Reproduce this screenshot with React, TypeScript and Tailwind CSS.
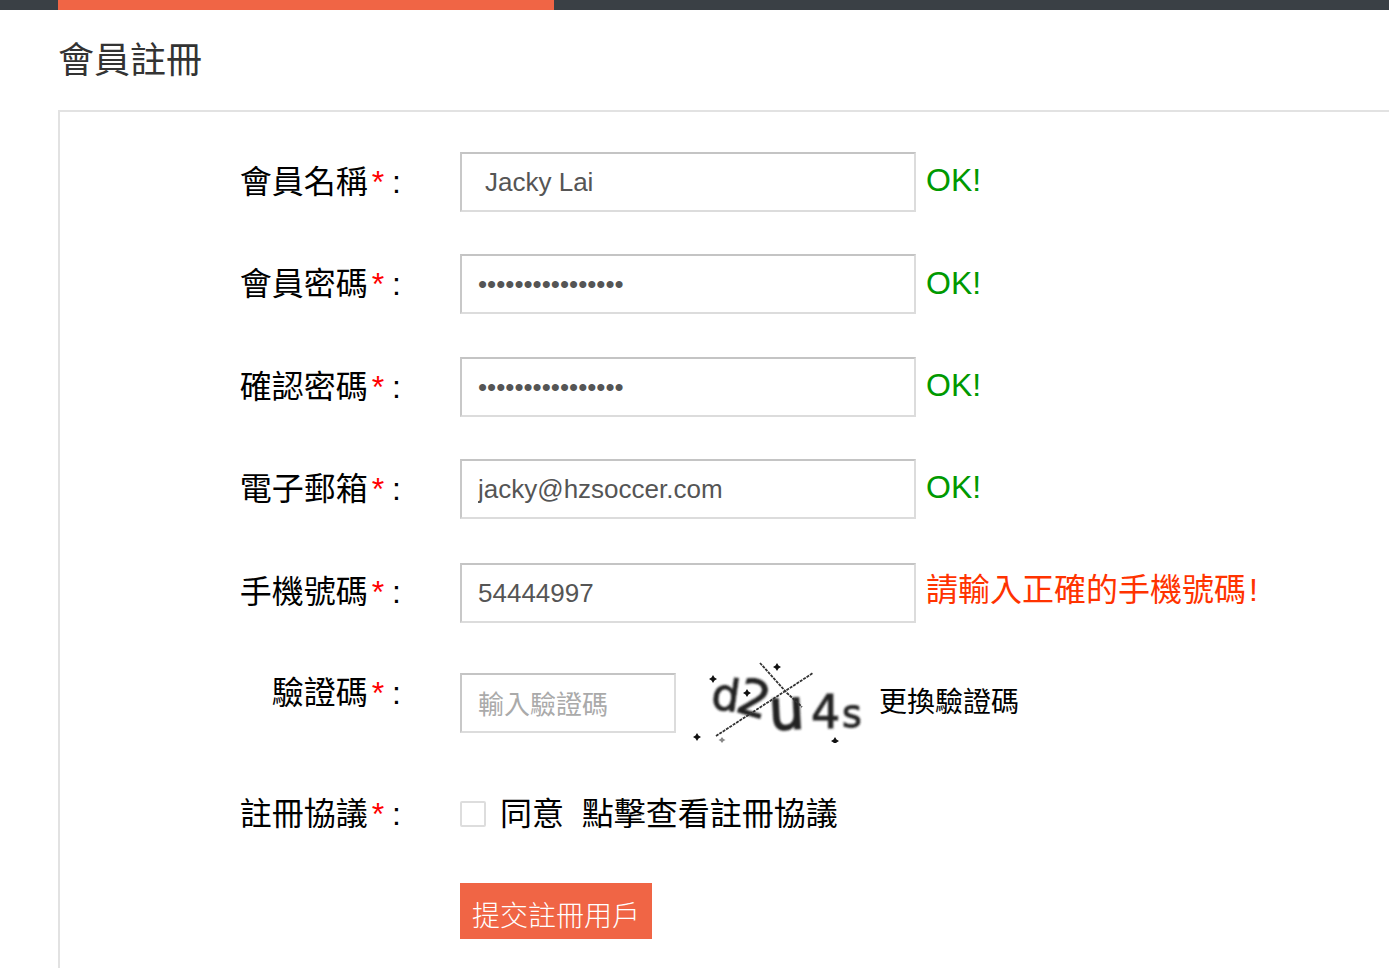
const cjk = "font-['Liberation_Sans','Noto_Sans_CJK_TC',sans-serif]";

function Label({ text, shift = "" }: { text: string; shift?: string }) {
  return (
    <div className={`${shift} w-[340px] mr-[60px] flex justify-end items-center text-[32px] leading-[40px] text-black whitespace-nowrap`}>
      <span>{text}</span>
      <span className="text-[#ff0000] ml-[4px]">*</span>
      <span className="ml-[8px] mr-[-1px]">:</span>
    </div>
  );
}

function Field({
  type = "text",
  value,
  pad = "pl-[16px]",
  width = "w-[456px]",
  placeholder,
}: {
  type?: string;
  value?: string;
  pad?: string;
  width?: string;
  placeholder?: string;
}) {
  return (
    <input
      readOnly
      type={type}
      value={value}
      placeholder={placeholder}
      className={`${width} ${pad} h-[60px] border-2 border-t-[#c4c4c4] border-l-[#c8c8c8] border-r-[#dcdcdc] border-b-[#dcdcdc] bg-white text-[#555555] text-[26px] outline-none placeholder:text-[#aaaaaa]`}
    />
  );
}

function Ok({ shift = "-mt-[4px]" }: { shift?: string }) {
  return <span className={`${shift} ml-[10px] text-[32px] leading-[40px] text-[#009900]`}>OK!</span>;
}

function Captcha() {
  const face = "'DejaVu Sans', sans-serif";
  return (
    <svg width="172" height="88" viewBox="0 0 172 88" className="ml-[16px] -mt-[8px] shrink-0">
      <defs>
        <filter id="soft">
          <feGaussianBlur stdDeviation="0.8" />
        </filter>
      </defs>
      <g fill="#222" stroke="#222" strokeWidth="0.9" fontFamily={face} filter="url(#soft)">
        <text x="20" y="55" fontSize="44" transform="rotate(8 32 40)">d</text>
        <text x="46" y="60" fontSize="50" transform="rotate(16 58 44)">2</text>
        <text x="77" y="74" fontSize="56" strokeWidth="1.6" transform="rotate(-3 95 58)">u</text>
        <text x="119" y="73" fontSize="46">4</text>
        <text x="150" y="72" fontSize="38">s</text>
      </g>
      <g stroke="#333" strokeWidth="1.8" fill="none" strokeDasharray="3 1">
        <path d="M24 81 L121 18" />
        <path d="M68 8 L95 38 L110 52" />
      </g>
      <g fill="#111">
        <path d="M85 8 l1.5 2.5 2.5 1.5 -2.5 1.5 -1.5 2.5 -1.5 -2.5 -2.5 -1.5 2.5 -1.5z" />
        <path d="M5 78 l1.5 2.5 2.5 1.5 -2.5 1.5 -1.5 2.5 -1.5 -2.5 -2.5 -1.5 2.5 -1.5z" />
        <path d="M143 82 l1.5 2.5 2.5 1.5 -2.5 1.5 -1.5 2.5 -1.5 -2.5 -2.5 -1.5 2.5 -1.5z" />
        <path d="M55 34 l1.5 2.5 2.5 1.5 -2.5 1.5 -1.5 2.5 -1.5 -2.5 -2.5 -1.5 2.5 -1.5z" />
        <path d="M21 20 l1.5 2.5 2.5 1.5 -2.5 1.5 -1.5 2.5 -1.5 -2.5 -2.5 -1.5 2.5 -1.5z" />
        <path d="M30 82 l1.5 2 2 1 -2 1 -1.5 2 -1.5 -2 -2 -1 2 -1z" fillOpacity="0.5" />
      </g>
    </svg>
  );
}

export default function App() {
  return (
    <div className={`${cjk} w-[1389px] h-[968px] overflow-hidden bg-white`}>
      <div className="h-[10px] bg-[#3a4045] pl-[58px]">
        <div className="w-[496px] h-[10px] bg-[#f06545]" />
      </div>
      <h1 className="ml-[58px] h-[100px] pt-[28px] text-[36px] leading-[46px] font-normal text-[#333333]">會員註冊</h1>
      <div className="ml-[58px] w-[1400px] h-[900px] border-2 border-[#e2e2e2] pt-[40px]">
        <div className="flex items-center h-[60px] mb-[42px]">
          <Label text="會員名稱" />
          <Field value="Jacky Lai" pad="pl-[23px]" />
          <Ok />
        </div>
        <div className="flex items-center h-[60px] mb-[43px]">
          <Label text="會員密碼" />
          <Field type="password" value="1234567890123456" />
          <Ok shift="-mt-[2px]" />
        </div>
        <div className="flex items-center h-[60px] mb-[42px]">
          <Label text="確認密碼" />
          <Field type="password" value="1234567890123456" />
          <Ok />
        </div>
        <div className="flex items-center h-[60px] mb-[44px]">
          <Label text="電子郵箱" />
          <Field value="jacky@hzsoccer.com" />
          <Ok />
        </div>
        <div className="flex items-center h-[60px] mb-[50px]">
          <Label text="手機號碼" shift="-mt-[2px]" />
          <Field value="54444997" />
          <span className="ml-[10px] -mt-[6px] text-[32px] leading-[40px] text-[#ff3300]">
            請輸入正確的手機號碼<span className="ml-[3px]">!</span>
          </span>
        </div>
        <div className="flex items-center h-[60px] mb-[56px]">
          <Label text="驗證碼" shift="-mt-[20px]" />
          <Field width="w-[216px]" placeholder="輸入驗證碼" pad="pl-[16px] pt-[4px]" />
          <Captcha />
          <span className="ml-[15px] text-[28px] leading-[36px] text-black">更換驗證碼</span>
        </div>
        <div className="flex items-center h-[50px] mb-[44px]">
          <Label text="註冊協議" />
          <input type="checkbox" readOnly className="appearance-none w-[26px] h-[26px] border-2 border-[#dddddd] rounded-[2px] bg-white" />
          <span className="ml-[14px] text-[32px] leading-[40px] text-black whitespace-pre">同意  點擊查看註冊協議</span>
        </div>
        <div className="pl-[400px]">
          <button className="w-[192px] h-[56px] pt-[12px] bg-[#f06545] text-white text-[28px] leading-[36px] font-light">提交註冊用戶</button>
        </div>
      </div>
    </div>
  );
}
